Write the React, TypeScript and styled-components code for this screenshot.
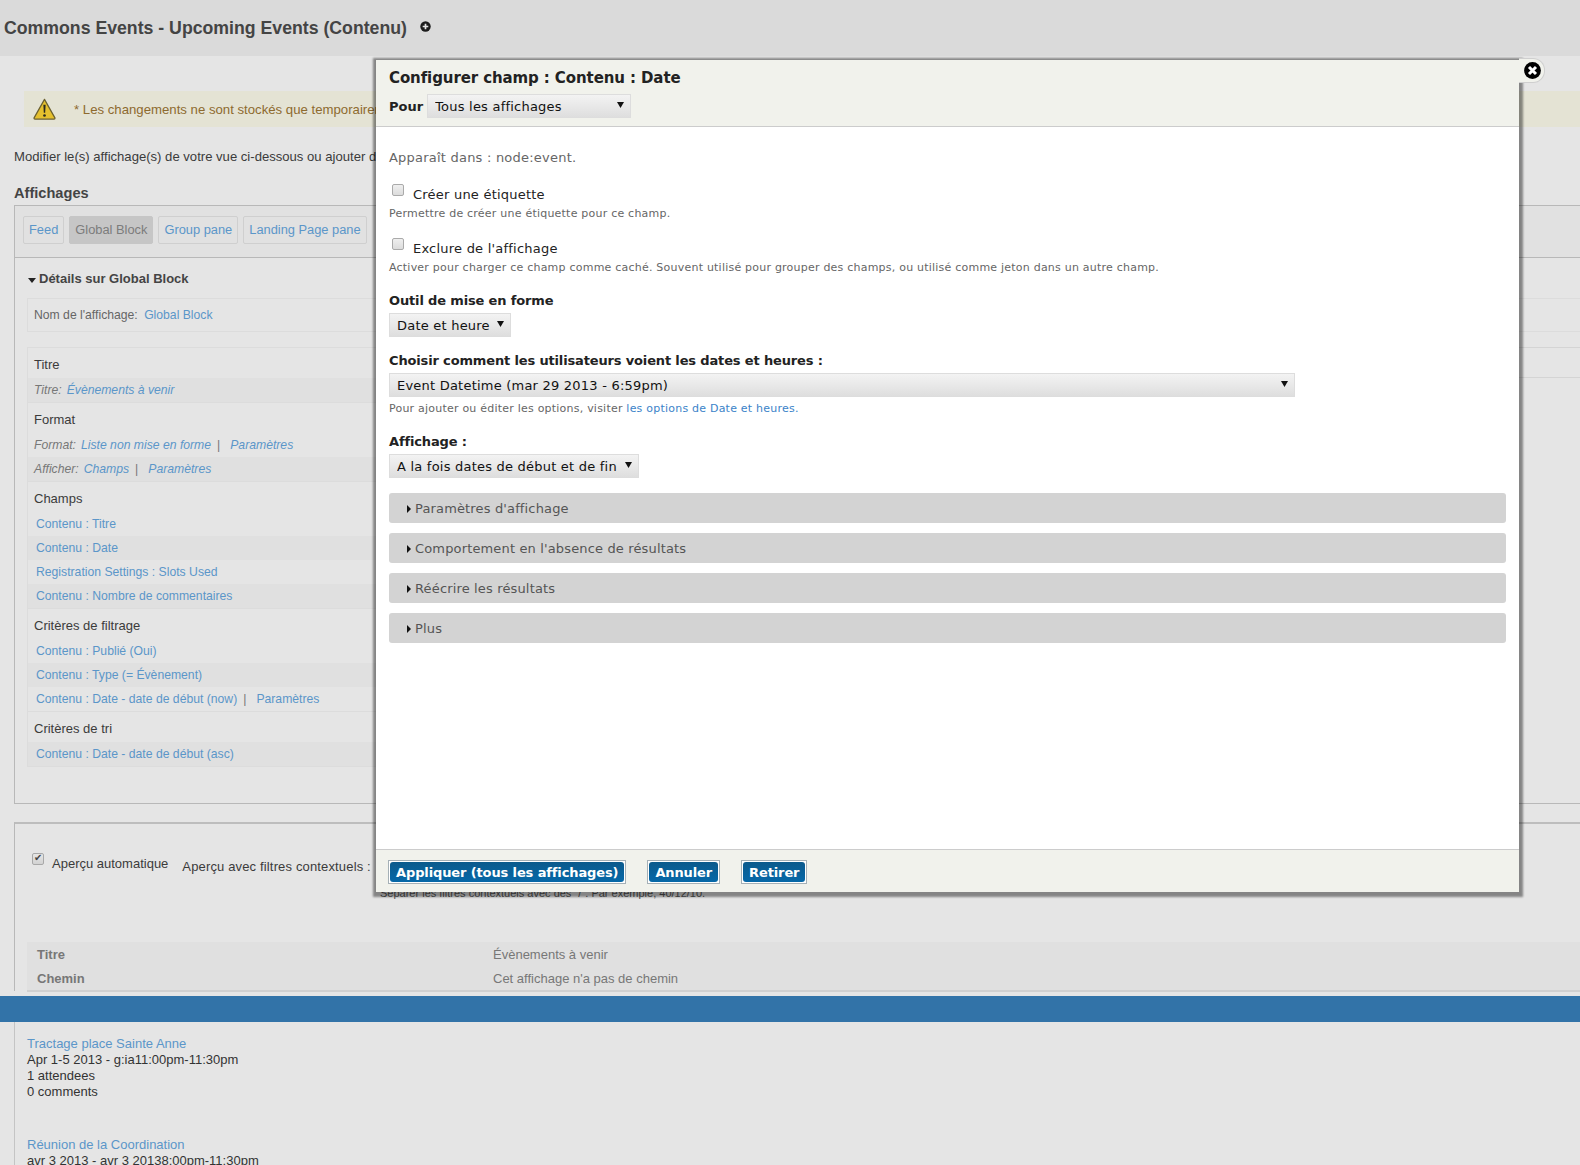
import styled, {createGlobalStyle} from "styled-components";

const GlobalStyle = createGlobalStyle`
    html, body {
        margin: 0;
        padding: 0;
        height: 100%;
        overflow: hidden;
        background: #e5e5e5;
    }
`

type SectionType = {
    title: string,
    rows: { label?: string, link: string, settings?: boolean, striped?: boolean }[],
    indent?: boolean,
}

const sections: SectionType[] = [
    {title: "Titre", rows: [{label: "Titre:", link: "Évènements à venir", striped: true}]},
    {
        title: "Format", rows: [
            {label: "Format:", link: "Liste non mise en forme", settings: true},
            {label: "Afficher:", link: "Champs", settings: true, striped: true},
        ]
    },
    {
        title: "Champs", indent: true, rows: [
            {link: "Contenu : Titre"},
            {link: "Contenu : Date", striped: true},
            {link: "Registration Settings : Slots Used"},
            {link: "Contenu : Nombre de commentaires", striped: true},
        ]
    },
    {
        title: "Critères de filtrage", indent: true, rows: [
            {link: "Contenu : Publié (Oui)"},
            {link: "Contenu : Type (= Évènement)", striped: true},
            {link: "Contenu : Date - date de début (now)", settings: true},
        ]
    },
    {
        title: "Critères de tri", indent: true, rows: [
            {link: "Contenu : Date - date de début (asc)", striped: true},
        ]
    },
]

const PlusIcon = () => (
    <PlusSvg width="11" height="11" viewBox="0 0 11 11">
        <circle cx="5.5" cy="5.5" r="5.2" fill="#1c1c1c"/>
        <path d="M5.5 2.7v5.6M2.7 5.5h5.6" stroke="#e5e5e5" strokeWidth="1.7"/>
    </PlusSvg>
)

const WarningIcon = () => (
    <svg width="23" height="22" viewBox="0 0 24 22">
        <path d="M12 1 L23 20.5 Q23 21.5 22 21.5 L2 21.5 Q1 21.5 1 20.5 Z" fill="#e5c02e" stroke="#6b6030"
              strokeWidth="1.3" strokeLinejoin="round"/>
        <path d="M10.8 6.5h2.4l-.5 8.5h-1.4z" fill="#2a2a20"/>
        <circle cx="12" cy="17.8" r="1.4" fill="#2a2a20"/>
    </svg>
)

const CloseIcon = () => (
    <svg width="17" height="17" viewBox="0 0 17 17">
        <circle cx="8.5" cy="8.5" r="8.4" fill="#000"/>
        <path d="M5 5l7 7M12 5l-7 7" stroke="#fff" strokeWidth="3"/>
    </svg>
)

const Select = (props: { value: string, width: number }) => (
    <SelectWrap $width={props.width}>
        <SelectField defaultValue={props.value}>
            <option>{props.value}</option>
        </SelectField>
        <SelectArrow width="7" height="6" viewBox="0 0 7 6">
            <path d="M0 0h7L3.5 6z" fill="#111"/>
        </SelectArrow>
    </SelectWrap>
)

const App = () => {
    return (
        <Page>
            <GlobalStyle/>
            <Header>
                <PageTitle>Commons Events - Upcoming Events (Contenu)</PageTitle>
                <PlusIcon/>
            </Header>
            <Main>
                <Notice>
                    <WarningIcon/>
                    <span>* Les changements ne sont stockés que temporairement.</span>
                </Notice>
                <Intro>Modifier le(s) affichage(s) de votre vue ci-dessous ou ajouter de nouveaux.</Intro>
                <BlockTitle>Affichages</BlockTitle>
                <Panel>
                    <TabBar>
                        <Tab>Feed</Tab>
                        <Tab $active>Global Block</Tab>
                        <Tab>Group pane</Tab>
                        <Tab>Landing Page pane</Tab>
                    </TabBar>
                    <Details>
                        <DetailsTitle>Détails sur Global Block</DetailsTitle>
                        <NameBox>Nom de l'affichage: <a>Global Block</a></NameBox>
                        <Columns>
                            <LeftColumn>
                                {sections.map((section) => (
                                    <Section key={section.title}>
                                        <SectionHead>{section.title}</SectionHead>
                                        {section.rows.map((row) => (
                                            <Row key={row.link} $striped={row.striped} $indent={section.indent}
                                                 $italic={!!row.label}>
                                                {row.label && <em>{row.label}</em>}
                                                <a>{row.link}</a>
                                                {row.settings && <Separator>|</Separator>}
                                                {row.settings && <a>Paramètres</a>}
                                            </Row>
                                        ))}
                                    </Section>
                                ))}
                            </LeftColumn>
                            <RightColumn/>
                        </Columns>
                    </Details>
                </Panel>
                <Preview>
                    <PreviewControls>
                        <AutoPreview>
                            <PreviewCheck type="checkbox" defaultChecked/>
                            <span>Aperçu automatique</span>
                        </AutoPreview>
                        <ContextLabel>Aperçu avec filtres contextuels :</ContextLabel>
                    </PreviewControls>
                    <PreviewHint>Séparer les filtres contextuels avec des "/". Par exemple, 40/12/10.</PreviewHint>
                    <InfoTable>
                        <InfoRow><b>Titre</b><span>Évènements à venir</span></InfoRow>
                        <InfoRow><b>Chemin</b><span>Cet affichage n'a pas de chemin</span></InfoRow>
                    </InfoTable>
                </Preview>
            </Main>
            <BlueBar/>
            <Results>
                <ResultItem>
                    <a>Tractage place Sainte Anne</a>
                    <div>Apr 1-5 2013 - g:ia11:00pm-11:30pm</div>
                    <div>1 attendees</div>
                    <div>0 comments</div>
                </ResultItem>
                <ResultItem>
                    <a>Réunion de la Coordination</a>
                    <div>avr 3 2013 - avr 3 20138:00pm-11:30pm</div>
                </ResultItem>
            </Results>

            <Modal>
                <CloseTab><CloseIcon/></CloseTab>
                <ModalHeader>
                    <ModalTitle>Configurer champ : Contenu : Date</ModalTitle>
                    <ForRow>
                        <b>Pour</b>
                        <Select value="Tous les affichages" width={204}/>
                    </ForRow>
                </ModalHeader>
                <ModalBody>
                    <AppearsIn>Apparaît dans : node:event.</AppearsIn>
                    <CheckField>
                        <CheckLine>
                            <FormCheck type="checkbox"/>
                            <span>Créer une étiquette</span>
                        </CheckLine>
                        <Help>Permettre de créer une étiquette pour ce champ.</Help>
                    </CheckField>
                    <CheckField>
                        <CheckLine>
                            <FormCheck type="checkbox"/>
                            <span>Exclure de l'affichage</span>
                        </CheckLine>
                        <Help>Activer pour charger ce champ comme caché. Souvent utilisé pour grouper des champs, ou
                            utilisé comme jeton dans un autre champ.</Help>
                    </CheckField>
                    <FieldLabel>Outil de mise en forme</FieldLabel>
                    <Select value="Date et heure" width={122}/>
                    <FieldLabel $tight>Choisir comment les utilisateurs voient les dates et heures :</FieldLabel>
                    <Select value="Event Datetime (mar 29 2013 - 6:59pm)" width={906}/>
                    <SelectHelp>Pour ajouter ou éditer les options, visiter <a>les options de Date et heures.</a></SelectHelp>
                    <FieldLabel>Affichage :</FieldLabel>
                    <Select value="A la fois dates de début et de fin" width={250}/>
                    <Accordions>
                        {["Paramètres d'affichage", "Comportement en l'absence de résultats", "Réécrire les résultats", "Plus"].map((item) => (
                            <AccordionBar key={item}>
                                <svg width="4" height="8" viewBox="0 0 4 8">
                                    <path d="M0 0l4 4-4 4z" fill="#111"/>
                                </svg>
                                {item}
                            </AccordionBar>
                        ))}
                    </Accordions>
                </ModalBody>
                <ModalFooter>
                    <ButtonFrame><Button>Appliquer (tous les affichages)</Button></ButtonFrame>
                    <ButtonFrame><Button>Annuler</Button></ButtonFrame>
                    <ButtonFrame><Button>Retirer</Button></ButtonFrame>
                </ModalFooter>
            </Modal>
        </Page>
    );
};

export default App;

const Page = styled.div`
    position: relative;
    height: 100vh;
    overflow: hidden;
    background: #e5e5e5;
    font-family: "Liberation Sans", Arial, sans-serif;
    font-size: 13px;
    color: #3b3b3b;

    a {
        color: #5b96c9;
    }
`

const Header = styled.div`
    height: 56px;
    background: #dadada;
    display: flex;
    align-items: center;
    gap: 13px;
    padding-left: 4px;
    box-sizing: border-box;
`

const PageTitle = styled.h1`
    margin: 0;
    font-size: 17.7px;
    font-weight: 700;
    color: #444;
`

const PlusSvg = styled.svg`
    margin-bottom: 4px;
`

const Main = styled.div`
    padding-left: 14px;
`

const Notice = styled.div`
    margin: 35px 0 0 10px;
    height: 36px;
    background: #e4e3d4;
    display: flex;
    align-items: center;
    gap: 18px;
    padding-left: 9px;
    font-size: 13.2px;
    color: #8d6a2f;
    white-space: nowrap;

    span {
        padding-top: 1px;
    }
`

const Intro = styled.p`
    margin: 20px 0 0;
    line-height: 20px;
    font-size: 13.1px;
    white-space: nowrap;
`

const BlockTitle = styled.h2`
    margin: 16px 0 2px;
    line-height: 20px;
    font-size: 14.6px;
    font-weight: 700;
    color: #444;
`

const Panel = styled.div`
    border: 1px solid #b8b8b8;
    border-right: 0;
`

const TabBar = styled.div`
    height: 52px;
    box-sizing: border-box;
    padding: 10px 0 0 8px;
    background: #e1e1e1;
    border-bottom: 1px solid #b8b8b8;
    display: flex;
    gap: 5px;
`

const Tab = styled.div<{ $active?: boolean }>`
    height: 28px;
    box-sizing: border-box;
    line-height: 26px;
    padding: 0 5px;
    border: 1px solid ${props => props.$active ? "#c6c6c6" : "#cfcfcf"};
    border-radius: 2px;
    background: ${props => props.$active ? "#c6c6c6" : "transparent"};
    color: ${props => props.$active ? "#7c7c7c" : "#5b96c9"};
    font-size: 12.85px;
`

const Details = styled.div`
    padding: 10px 0 36px 12px;
`

const DetailsTitle = styled.div`
    padding: 2px 0 0 12px;
    line-height: 18px;
    font-weight: 700;
    font-size: 13px;
    color: #444;
    position: relative;

    &::before {
        content: "";
        position: absolute;
        left: 1px;
        top: 10px;
        border: 4.5px solid transparent;
        border-top: 5px solid #222;
        border-bottom: 0;
    }
`

const NameBox = styled.div`
    margin-top: 10px;
    height: 34px;
    box-sizing: border-box;
    line-height: 32px;
    padding-left: 6px;
    border: 1px solid #dcdcdc;
    border-right: 0;
    font-size: 12.2px;
    color: #666;

    a {
        margin-left: 3px;
    }
`

const Columns = styled.div`
    margin-top: 15px;
    display: flex;
`

const LeftColumn = styled.div`
    width: 600px;
    border-left: 1px solid #dcdcdc;
`

const RightColumn = styled.div`
    flex: 1;
    height: 29px;
    border-top: 1px solid #d4d4d4;
    border-bottom: 1px solid #d4d4d4;
`

const Section = styled.div`
    border-top: 1px solid #dcdcdc;

    &:last-child {
        border-bottom: 1px solid #dcdcdc;
    }
`

const SectionHead = styled.div`
    height: 30px;
    line-height: 34px;
    padding-left: 6px;
    font-size: 13px;
`

const Row = styled.div<{ $striped?: boolean, $indent?: boolean, $italic?: boolean }>`
    height: 24px;
    line-height: 24px;
    padding-left: ${props => props.$indent ? "8px" : "6px"};
    background: ${props => props.$striped ? "#e0e0e0" : "transparent"};
    font-size: 12.2px;
    font-style: ${props => props.$italic ? "italic" : "normal"};
    color: #777;

    em {
        margin-right: 5px;
    }
`

const Separator = styled.span`
    margin: 0 10px 0 6px;
    font-style: normal;
`

const Preview = styled.div`
    margin-top: 18px;
    border-top: 2px solid #bdbdbd;
    border-left: 1px solid #b8b8b8;
    height: 169px;
    box-sizing: border-box;
`

const PreviewControls = styled.div`
    padding: 29px 0 0 17px;
    height: 39px;
    display: flex;
    gap: 14px;
    align-items: flex-start;
    line-height: 16px;
    font-size: 13px;
`

const AutoPreview = styled.div`
    display: flex;
    gap: 8px;
    height: 16px;

    span {
        margin-top: 3px;
    }
`

const ContextLabel = styled.span`
    margin-top: 6px;
    letter-spacing: .15px;
`

const PreviewCheck = styled.input`
    appearance: none;
    position: relative;
    margin: 0;
    width: 12px;
    height: 12px;
    box-sizing: border-box;
    border: 1px solid #a8a8a8;
    border-radius: 2px;
    background: linear-gradient(#e6e6e6, #d2d2d2);

    &::after {
        content: "✔";
        position: absolute;
        left: 1px;
        top: -2px;
        font-size: 10px;
        line-height: 12px;
        color: #444;
    }
`

const PreviewHint = styled.div`
    padding-left: 365px;
    margin-top: -5px;
    line-height: 12px;
    font-size: 11px;
    color: #555;
`

const InfoTable = styled.div`
    margin: 43px 0 0 12px;
    background: #e0e0e0;
    border-bottom: 2px solid #d0d0d0;
    color: #777;
    font-size: 13px;
`

const InfoRow = styled.div`
    height: 24px;
    box-sizing: border-box;
    padding: 1px 0 0 10px;
    line-height: 24px;
    display: grid;
    grid-template-columns: 456px 1fr;
`

const BlueBar = styled.div`
    margin-top: 5px;
    height: 26px;
    background: #3273a8;
`

const Results = styled.div`
    margin-left: 14px;
    border-left: 1px solid #c4c4c4;
    padding: 14px 0 0 12px;
    height: 200px;
    line-height: 16px;
    font-size: 13px;
    color: #333;
`

const ResultItem = styled.div`
    margin-bottom: 37px;
`

const Modal = styled.div`
    position: absolute;
    left: 376px;
    top: 60px;
    width: 1143px;
    height: 832px;
    display: flex;
    flex-direction: column;
    background: #fff;
    box-shadow: 0 1.5px 2px 3.5px rgba(0, 0, 0, .42);
    font-family: "DejaVu Sans", Verdana, sans-serif;
    font-size: 13px;
    letter-spacing: .22px;
    color: #222;
`

const CloseTab = styled.div`
    position: absolute;
    top: -2px;
    right: -26px;
    width: 26px;
    height: 25px;
    box-sizing: border-box;
    background: #f1f2ec;
    border-radius: 0 12px 12px 0;
    border: 1px solid #cfcfcf;
    border-left: 0;
    display: flex;
    align-items: center;
    justify-content: flex-end;
    padding-right: 3px;
`

const ModalHeader = styled.div`
    height: 67px;
    box-sizing: border-box;
    background: #f1f2ec;
    border-bottom: 1px solid #ccc;
    padding: 7px 13px 0;

    b {
        letter-spacing: 0;
    }
`

const ModalTitle = styled.h1`
    margin: 0;
    font-size: 15px;
    line-height: 22px;
    font-weight: 700;
    letter-spacing: -.1px;
    color: #222;
`

const ForRow = styled.div`
    margin-top: 5px;
    display: flex;
    align-items: center;
    gap: 4px;
`

const SelectWrap = styled.div<{ $width: number }>`
    position: relative;
    width: ${props => props.$width}px;
    height: 24px;
`

const SelectField = styled.select`
    appearance: none;
    width: 100%;
    height: 24px;
    box-sizing: border-box;
    margin: 0;
    padding: 0 0 0 7px;
    border: 1px solid #ddd;
    border-radius: 0;
    background: linear-gradient(#f3f3f3, #dedede);
    font-family: "DejaVu Sans", Verdana, sans-serif;
    font-size: 13px;
    letter-spacing: .22px;
    color: #111;
`

const SelectArrow = styled.svg`
    position: absolute;
    right: 7px;
    top: 8px;
    pointer-events: none;
`

const ModalBody = styled.div`
    flex: 1;
    padding: 20px 13px 0;
`

const AppearsIn = styled.div`
    height: 20px;
    line-height: 22px;
    color: #666;
`

const CheckField = styled.div`
    margin-top: 17px;
`

const CheckLine = styled.div`
    display: flex;
    height: 20px;
    line-height: 22px;
`

const FormCheck = styled.input`
    appearance: none;
    margin: 0 9px 0 3px;
    width: 12px;
    height: 12px;
    box-sizing: border-box;
    border: 1px solid #aaa;
    border-radius: 2px;
    background: linear-gradient(#efefef, #dcdcdc);
`

const Help = styled.div`
    height: 17px;
    line-height: 19px;
    font-size: 11px;
    color: #666;
`

const FieldLabel = styled.div<{ $tight?: boolean }>`
    margin: ${props => props.$tight ? "15px" : "17px"} 0 3px;
    line-height: 18px;
    font-weight: 700;
    letter-spacing: -.15px;
    color: #222;
`

const SelectHelp = styled.div`
    margin-top: 3px;
    height: 16px;
    line-height: 18px;
    font-size: 11px;
    color: #666;

    a {
        color: #3b83c9;
    }
`

const Accordions = styled.div`
    margin-top: 15px;
    display: flex;
    flex-direction: column;
    gap: 10px;
`

const AccordionBar = styled.div`
    height: 30px;
    box-sizing: border-box;
    padding: 1px 0 0 18px;
    background: #d3d3d3;
    border-radius: 3px;
    color: #555;
    letter-spacing: .15px;
    display: flex;
    align-items: center;
    gap: 4px;
`

const ModalFooter = styled.div`
    height: 43px;
    box-sizing: border-box;
    background: #f1f2ec;
    border-top: 1px solid #ccc;
    padding: 10px 0 0 12px;
    display: flex;
    gap: 21px;
    align-items: flex-start;
`

const ButtonFrame = styled.div`
    border: 1px solid #a5b0b6;
    padding: 1px;
    background: #fff;
    display: flex;
`

const Button = styled.button`
    height: 20px;
    padding: 0 6px;
    border: 0;
    border-radius: 3px;
    background: linear-gradient(#0b5a8c, #0668a8);
    font-family: "DejaVu Sans", Verdana, sans-serif;
    font-size: 13px;
    font-weight: 700;
    letter-spacing: -.12px;
    color: #fff;
`
